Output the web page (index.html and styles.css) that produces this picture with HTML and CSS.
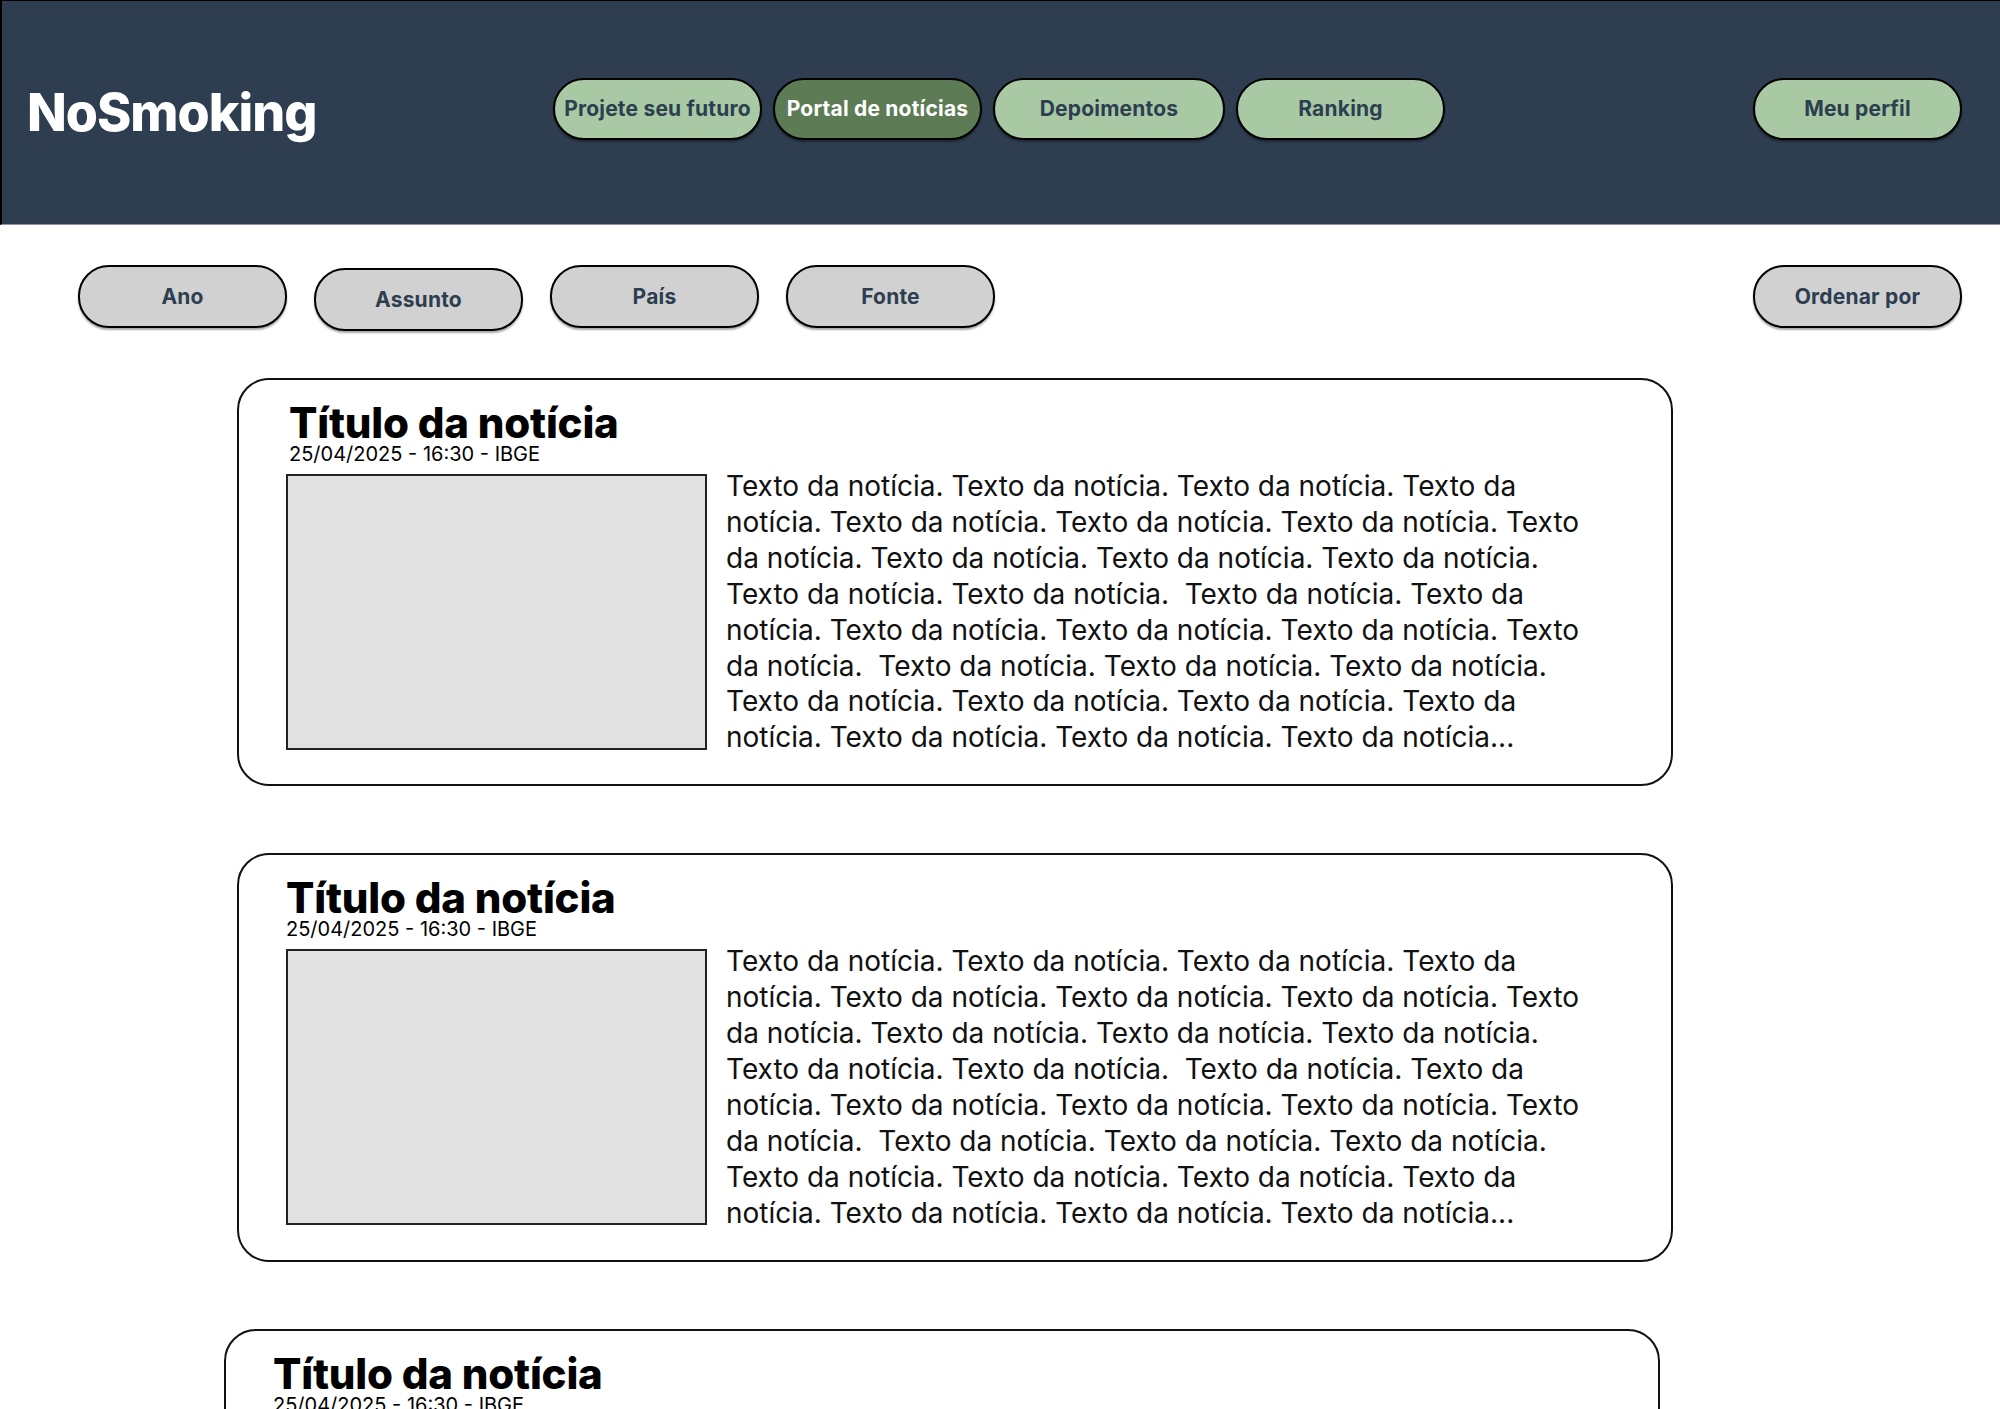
FILE: index.html
```html
<!DOCTYPE html>
<html lang="pt-BR">
<head>
<meta charset="utf-8">
<title>NoSmoking - Portal de notícias</title>
<link rel="stylesheet" href="styles.css">
</head>
<body>
<header class="topbar">
  <div class="brand">NoSmoking</div>
  <nav class="mainnav">
    <a class="pill pill-green">Projete seu futuro</a>
    <a class="pill pill-active">Portal de notícias</a>
    <a class="pill pill-green pill-wide">Depoimentos</a>
    <a class="pill pill-green">Ranking</a>
  </nav>
  <a class="pill pill-green profile">Meu perfil</a>
</header>

<section class="filters">
  <button class="pill pill-gray">Ano</button>
  <button class="pill pill-gray pill-low">Assunto</button>
  <button class="pill pill-gray">País</button>
  <button class="pill pill-gray">Fonte</button>
  <button class="pill pill-gray sort">Ordenar por</button>
</section>

<main class="feed">
  <article class="card">
    <h2 class="card-title card-title-indent">Título da notícia</h2>
    <div class="card-meta card-title-indent">25/04/2025 - 16:30 - IBGE</div>
    <div class="card-body">
      <div class="thumb"></div>
      <p class="card-text">Texto da notícia. Texto da notícia. Texto da notícia. Texto da<br>notícia. Texto da notícia. Texto da notícia. Texto da notícia. Texto<br>da notícia. Texto da notícia. Texto da notícia. Texto da notícia.<br>Texto da notícia. Texto da notícia.&nbsp; Texto da notícia. Texto da<br>notícia. Texto da notícia. Texto da notícia. Texto da notícia. Texto<br>da notícia.&nbsp; Texto da notícia. Texto da notícia. Texto da notícia.<br>Texto da notícia. Texto da notícia. Texto da notícia. Texto da<br>notícia. Texto da notícia. Texto da notícia. Texto da notícia...</p>
    </div>
  </article>

  <article class="card">
    <h2 class="card-title">Título da notícia</h2>
    <div class="card-meta">25/04/2025 - 16:30 - IBGE</div>
    <div class="card-body">
      <div class="thumb"></div>
      <p class="card-text">Texto da notícia. Texto da notícia. Texto da notícia. Texto da<br>notícia. Texto da notícia. Texto da notícia. Texto da notícia. Texto<br>da notícia. Texto da notícia. Texto da notícia. Texto da notícia.<br>Texto da notícia. Texto da notícia.&nbsp; Texto da notícia. Texto da<br>notícia. Texto da notícia. Texto da notícia. Texto da notícia. Texto<br>da notícia.&nbsp; Texto da notícia. Texto da notícia. Texto da notícia.<br>Texto da notícia. Texto da notícia. Texto da notícia. Texto da<br>notícia. Texto da notícia. Texto da notícia. Texto da notícia...</p>
    </div>
  </article>

  <article class="card card-shift">
    <h2 class="card-title">Título da notícia</h2>
    <div class="card-meta">25/04/2025 - 16:30 - IBGE</div>
    <div class="card-body">
      <div class="thumb"></div>
      <p class="card-text">Texto da notícia. Texto da notícia. Texto da notícia. Texto da<br>notícia. Texto da notícia. Texto da notícia. Texto da notícia. Texto<br>da notícia. Texto da notícia. Texto da notícia. Texto da notícia.<br>Texto da notícia. Texto da notícia.&nbsp; Texto da notícia. Texto da<br>notícia. Texto da notícia. Texto da notícia. Texto da notícia. Texto<br>da notícia.&nbsp; Texto da notícia. Texto da notícia. Texto da notícia.<br>Texto da notícia. Texto da notícia. Texto da notícia. Texto da<br>notícia. Texto da notícia. Texto da notícia. Texto da notícia...</p>
    </div>
  </article>
</main>
</body>
</html>
```

FILE: styles.css
```css
* { box-sizing: border-box; }

body {
  margin: 0;
  background: #ffffff;
  font-family: Inter, "Noto Sans", "DejaVu Sans", sans-serif;
  color: #000;
}

.topbar {
  display: flex;
  align-items: center;
  height: 225px;
  padding: 0 38px 8px 25px;
  background: #2e3e50;
  border-top: 1px solid #000;
  border-left: 2px solid #000;
  border-bottom: 1px solid #8f93a3;
}

.brand {
  flex: 0 0 526px;
  margin-top: 7px;
  color: #fff;
  font-weight: 800;
  font-size: 52px;
  letter-spacing: -1px;
}

.mainnav {
  display: flex;
  gap: 11px;
}

.pill {
  display: flex;
  align-items: center;
  justify-content: center;
  width: 209px;
  height: 62px;
  border: 2px solid #000;
  border-radius: 31px;
  font-family: Inter, "Noto Sans", sans-serif;
  font-weight: 700;
  font-size: 21px;
  letter-spacing: 0.2px;
  color: #2c3e50;
  text-decoration: none;
  box-shadow: 0 2px 2px rgba(0, 0, 0, 0.35);
  cursor: pointer;
  padding: 0;
}

.pill-green { background: #a8c9a3; }
.pill-active { background: #5d7b55; color: #ffffff; }
.pill-wide { width: 232px; }
.profile { margin-left: auto; }

.filters {
  display: flex;
  align-items: flex-start;
  gap: 27px;
  padding: 40px 38px 0 78px;
}

.pill-gray {
  background: #d1d1d1;
  height: 63px;
}
.pill-low { margin-top: 3px; }
.sort { margin-left: auto; }

.feed {
  display: flex;
  flex-direction: column;
  gap: 67px;
  padding-top: 47px;
}

.card {
  width: 1436px;
  margin-left: 237px;
  border: 2px solid #111;
  border-radius: 32px;
  padding: 25px 40px 28px 47px;
}
.card-shift { margin-left: 224px; }

.card-title {
  margin: 0;
  font-size: 42px;
  font-weight: 800;
  line-height: 36px;
  letter-spacing: -0.2px;
}
.card-title-indent { margin-left: 3px; }

.card-meta {
  margin-top: 2px;
  font-size: 20px;
  line-height: 23px;
}

.card-body {
  display: flex;
  align-items: flex-start;
  gap: 19px;
  margin-top: 8px;
}

.thumb {
  flex: 0 0 421px;
  height: 276px;
  background: #e1e1e1;
  border: 2px solid #222;
}

.card-text {
  margin: -5px 0 0 0;
  font-size: 28px;
  line-height: 35.9px;
  color: #111;
  white-space: nowrap;
}
```
